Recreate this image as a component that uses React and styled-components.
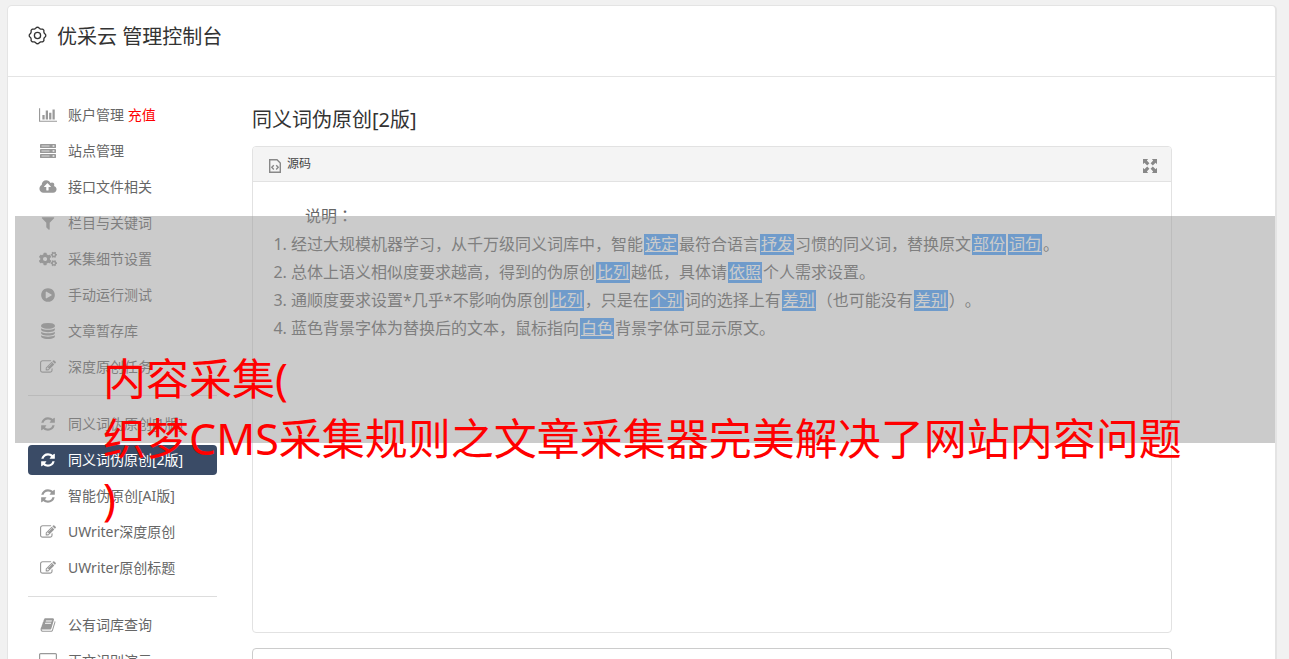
import React from "react";
import styled, { createGlobalStyle, css } from "styled-components";
import { FaCogs } from "react-icons/fa";

const GlobalStyle = createGlobalStyle`
  * {
    box-sizing: border-box;
  }

  html {
    scrollbar-width: none;
  }

  body {
    margin: 0;
    background: #f1f1f1;
    color: #333;
    font-family: "Noto Sans", "Noto Sans CJK SC", sans-serif;
    font-size: 14px;
    text-spacing-trim: space-all;
  }
`;

const Page = styled.div`
  position: relative;
  padding: 5px 12px 0 7px;
`;

const Shell = styled.div`
  background: #fff;
  border: 1px solid #e4e4e4;
  border-right-width: 2px;
  border-radius: 5px 5px 0 0;
`;

const Header = styled.header`
  display: flex;
  align-items: flex-start;
  gap: 10px;
  height: 71px;
  padding: 17px 20px 0;
  border-bottom: 1px solid #e4e4e4;

  svg {
    margin-top: 3px;
  }
`;

const HeaderTitle = styled.h1`
  margin: 0;
  font-size: 20px;
  font-weight: 400;
  line-height: 28px;
`;

const Body = styled.div`
  display: flex;
  gap: 35px;
  padding: 23px 103px 0 20px;
`;

const Sidebar = styled.nav`
  flex: none;
  width: 189px;
`;

const NavGroup = styled.ul`
  list-style: none;
  margin: 0;
  padding: 0 0 13px;
  display: flex;
  flex-direction: column;
  gap: 6px;

  & + & {
    padding-top: 13px;
    border-top: 1px solid #ddd;
  }
`;

const NavLink = styled.a`
  display: flex;
  align-items: center;
  gap: 10px;
  height: 30px;
  padding: 0 10px;
  border-radius: 4px;
  color: #666;
  line-height: 20px;
  text-decoration: none;
  white-space: nowrap;

  ${({ $active }) =>
    $active &&
    css`
      background: #3a4b66;
      color: #fff;
    `}
`;

const NavIcon = styled.span`
  flex: none;
  display: flex;
  justify-content: center;
  width: 20px;
  color: ${({ $active }) => ($active ? "#fff" : "#999")};
`;

const Recharge = styled.span`
  color: #f00;
`;

const Content = styled.main`
  flex: 1;
  min-width: 0;
`;

const PageTitle = styled.h2`
  margin: 5px 0 11px;
  font-size: 20px;
  font-weight: 400;
  line-height: 30px;
`;

const Editor = styled.section`
  min-height: 487px;
  border: 1px solid #e2e2e2;
  border-radius: 4px;
  overflow: hidden;
`;

const Toolbar = styled.div`
  display: flex;
  align-items: center;
  justify-content: space-between;
  height: 35px;
  padding: 0 14px 0 16px;
  background: #f4f4f4;
  border-bottom: 1px solid #e2e2e2;
`;

const ToolButton = styled.button`
  display: flex;
  align-items: center;
  gap: 6px;
  padding: 0;
  border: 0;
  background: none;
  color: #444;
  font: inherit;
  font-size: 12px;
  line-height: 20px;

  svg {
    margin-top: 3px;
    color: #888;
  }
`;

const Article = styled.div`
  padding: 20px;
  color: #666;
  font-size: 16px;
  line-height: 28px;
`;

const Lead = styled.p`
  margin: 0;
  font-family: "Noto Sans", "Noto Sans CJK TC", sans-serif;
  text-indent: 2em;
`;

const Notes = styled.ol`
  margin: 0;
  padding-left: 18px;
`;

const Swap = styled.span`
  display: inline-block;
  margin: 0 1px;
  padding: 0 1px;
  background: #479fff;
  color: #fff;
  line-height: 21px;
  text-decoration: underline;
`;

const Result = styled.textarea`
  display: block;
  width: 100%;
  height: 120px;
  margin-top: 15px;
  border: 1px solid #ccc;
  border-radius: 4px;
  resize: none;
`;

const Banner = styled.div`
  position: absolute;
  top: 216px;
  left: 15px;
  right: 14px;
  height: 227px;
  padding: 133px 0 0 88px;
  background: rgba(151, 151, 151, 0.5);
  pointer-events: none;
`;

const BannerText = styled.p`
  margin: 0;
  color: #f00;
  font-size: 43px;
  line-height: 60px;
  white-space: nowrap;
`;

const paths = {
  chart:
    "M640 896v512h-256v-512h256zm384-512v1024h-256v-1024h256zm1024 1152v128h-2048v-1536h128v1408h1920zm-640-896v768h-256v-768h256zm384-384v1152h-256v-1152h256z",
  cloud:
    "M1216 864q0-14-9-23l-352-352q-9-9-23-9t-23 9l-351 351q-10 12-10 24 0 14 9 23t23 9h224v352q0 13 9.5 22.5t22.5 9.5h192q13 0 22.5-9.5t9.5-22.5v-352h224q13 0 22.5-9.5t9.5-22.5zm640 288q0 159-112.5 271.5t-271.5 112.5h-1088q-185 0-316.5-131.5t-131.5-316.5q0-130 70-240t188-165q-2-30-2-43 0-212 150-362t362-150q156 0 285.5 87t188.5 231q71-62 166-62 106 0 181 75t75 181q0 76-41 138 130 31 213.5 135.5t83.5 238.5z",
  filter:
    "M1595 295q17 41-14 70l-493 493v742q0 42-39 59-13 5-25 5-27 0-45-19l-256-256q-19-19-19-45v-486l-493-493q-31-29-14-70 17-39 59-39h1280q42 0 59 39z",
  play: "M896 128q209 0 385.5 103t279.5 279.5 103 385.5-103 385.5-279.5 279.5-385.5 103-385.5-103-279.5-279.5-103-385.5 103-385.5 279.5-279.5 385.5-103zm384 823q32-18 32-55t-32-55l-544-320q-31-19-64-1-32 19-32 56v640q0 37 32 56 16 8 32 8 17 0 32-9z",
  database:
    "M896 768q237 0 443-43t325-127v170q0 69-103 128t-280 93.5-385 34.5-385-34.5-280-93.5-103-128v-170q119 84 325 127t443 43zm0 768q237 0 443-43t325-127v170q0 69-103 128t-280 93.5-385 34.5-385-34.5-280-93.5-103-128v-170q119 84 325 127t443 43zm0-384q237 0 443-43t325-127v170q0 69-103 128t-280 93.5-385 34.5-385-34.5-280-93.5-103-128v-170q119 84 325 127t443 43zm0-1152q208 0 385 34.5t280 93.5 103 128v128q0 69-103 128t-280 93.5-385 34.5-385-34.5-280-93.5-103-128v-128q0-69 103-128t280-93.5 385-34.5z",
  edit: "M888 1184l116-116-152-152-116 116v56h96v96h56zm440-720q-16-16-33 1l-350 350q-17 17-1 33t33-1l350-350q17-17 1-33zm80 594v190q0 119-84.5 203.5t-203.5 84.5h-832q-119 0-203.5-84.5t-84.5-203.5v-832q0-119 84.5-203.5t203.5-84.5h832q63 0 117 25 15 7 18 23 3 17-9 29l-49 49q-14 14-32 8-23-6-45-6h-832q-66 0-113 47t-47 113v832q0 66 47 113t113 47h832q66 0 113-47t47-113v-126q0-13 9-22l64-64q15-15 35-7t20 29zm-96-738l288 288-672 672h-288v-288zm444 132l-92 92-288-288 92-92q28-28 68-28t68 28l152 152q28 28 28 68t-28 68z",
  refresh:
    "M1639 1056q0 5-1 7-64 268-268 434.5t-478 166.5q-146 0-282.5-55t-243.5-157l-129 129q-19 19-45 19t-45-19-19-45v-448q0-26 19-45t45-19h448q26 0 45 19t19 45-19 45l-137 137q71 66 161 102t187 36q134 0 250-65t186-179q11-17 53-117 8-23 30-23h192q13 0 22.5 9.5t9.5 22.5zm25-800v448q0 26-19 45t-45 19h-448q-26 0-45-19t-19-45 19-45l138-138q-148-137-349-137-134 0-250 65t-186 179q-11 17-53 117-8 23-30 23h-199q-13 0-22.5-9.5t-9.5-22.5v-7q65-268 270-434.5t480-166.5q146 0 284 55.5t245 156.5l130-129q19-19 45-19t45 19 19 45z",
  book: "M1703 478q40 57 18 129l-275 906q-19 64-76.5 107.5t-122.5 43.5h-923q-77 0-148.5-53.5t-99.5-131.5q-24-67-2-127 0-4 3-27t4-37q1-8-3-21.5t-3-19.5q2-11 8-21t16.5-23.5 16.5-23.5q23-38 45-91.5t30-91.5q3-10 .5-30t-.5-28q3-11 17-28t17-23q21-36 42-92t25-90q1-9-2.5-32t.5-28q4-13 22-30.5t22-22.5q19-26 42.5-84.5t27.5-96.5q1-8-3-25.5t-2-26.5q2-8 9-18t18-23 17-21q8-12 16.5-30.5t15-35 16-36 19.5-32 26.5-23.5 36-11.5 47.5 5.5l-1 3q38-9 51-9h761q74 0 114 56t18 130l-274 906q-36 119-71.5 153.5t-128.5 34.5h-869q-27 0-38 15-11 16-1 43 24 70 144 70h923q29 0 56-15.5t35-41.5l300-987q7-22 5-57 38 15 59 43zm-1064 2q-4 13 2 22.5t20 9.5h608q13 0 25.5-9.5t16.5-22.5l21-64q4-13-2-22.5t-20-9.5h-608q-13 0-25.5 9.5t-16.5 22.5zm-83 256q-4 13 2 22.5t20 9.5h608q13 0 25.5-9.5t16.5-22.5l21-64q4-13-2-22.5t-20-9.5h-608q-13 0-25.5 9.5t-16.5 22.5z",
};

// [left edge, box width, drawn width]
const boxes = {
  chart: [0, 2048, 18],
  cloud: [-64, 1920, 18],
};

const Glyph = ({ name }) => {
  const [x, w, width] = boxes[name] || [0, 1792, 16];
  return (
    <svg width={width} height="16" viewBox={`${x} 0 ${w} 1792`} fill="currentColor" aria-hidden="true">
      <path d={paths[name]} />
    </svg>
  );
};

const ServerIcon = () => (
  <svg width="16" height="14" viewBox="0 0 16 14" fill="currentColor" aria-hidden="true">
    {[0, 5, 10].map((y) => (
      <g key={y}>
        <rect y={y} width="16" height="4" rx="0.4" />
        <path d={`M1.5 ${y + 2}h8`} stroke="#fff" strokeWidth="1.2" opacity="0.55" />
        <path d={`M12.6 ${y + 2}h1.8`} stroke="#fff" strokeWidth="1.6" opacity="0.8" />
      </g>
    ))}
  </svg>
);

const ScreenIcon = () => (
  <svg width="18" height="16" viewBox="0 0 18 16" fill="none" stroke="currentColor" aria-hidden="true">
    <rect x="0.6" y="0.6" width="16.8" height="12" rx="1" strokeWidth="1.2" />
    <path d="M6 15.4h6M9 12.6v2.8" strokeWidth="1.4" />
  </svg>
);

// shallow rounded teeth around a small hub
const GearIcon = () => {
  const points = Array.from({ length: 96 }, (_, i) => {
    const a = (i / 96) * Math.PI * 2;
    const r = 7.7 + 0.6 * Math.tanh(1.6 * Math.cos(a * 8));
    return `${(9.5 + r * Math.sin(a)).toFixed(2)},${(9.5 - r * Math.cos(a)).toFixed(2)}`;
  });
  return (
    <svg width="19" height="19" viewBox="0 0 19 19" fill="none" stroke="#333" strokeWidth="1.3" strokeLinejoin="round" aria-hidden="true">
      <polygon points={points.join(" ")} />
      <circle cx="9.5" cy="9.5" r="3.1" />
    </svg>
  );
};

const SourceIcon = () => (
  <svg width="12" height="14" viewBox="0 0 12 14" fill="none" stroke="currentColor" aria-hidden="true">
    <path d="M0.7 0.7h7.3l3.3 3.3v9.3h-10.6z" strokeWidth="1.4" />
    <path d="M4.8 6.2l-2 2.1 2 2.1M7.2 6.2l2 2.1-2 2.1" strokeWidth="1.4" />
  </svg>
);

const ExpandIcon = () => (
  <svg width="14" height="14" viewBox="0 0 14 14" fill="currentColor" aria-hidden="true">
    {[0, 90, 180, 270].map((turn) => (
      <path key={turn} transform={`rotate(${turn} 7 7)`} d="M0 0h5.2l-1.4 1.4 2.6 2.8-2.2 2.2-2.8-2.6-1.4 1.4z" />
    ))}
  </svg>
);

const groups = [
  [
    { icon: <Glyph name="chart" />, label: "账户管理", extra: "充值" },
    { icon: <ServerIcon />, label: "站点管理" },
    { icon: <Glyph name="cloud" />, label: "接口文件相关" },
    { icon: <Glyph name="filter" />, label: "栏目与关键词" },
    { icon: <FaCogs size={18} />, label: "采集细节设置" },
    { icon: <Glyph name="play" />, label: "手动运行测试" },
    { icon: <Glyph name="database" />, label: "文章暂存库" },
    { icon: <Glyph name="edit" />, label: "深度原创任务" },
  ],
  [
    { icon: <Glyph name="refresh" />, label: "同义词伪原创[1版]" },
    { icon: <Glyph name="refresh" />, label: "同义词伪原创[2版]", active: true },
    { icon: <Glyph name="refresh" />, label: "智能伪原创[AI版]" },
    { icon: <Glyph name="edit" />, label: "UWriter深度原创" },
    { icon: <Glyph name="edit" />, label: "UWriter原创标题" },
  ],
  [
    { icon: <Glyph name="book" />, label: "公有词库查询" },
    { icon: <ScreenIcon />, label: "正文识别演示" },
  ],
];

const App = () => {
  return (
    <>
      <GlobalStyle />
      <Page>
        <Shell>
          <Header>
            <GearIcon />
            <HeaderTitle>优采云 管理控制台</HeaderTitle>
          </Header>

          <Body>
            <Sidebar>
              {groups.map((items, index) => (
                <NavGroup key={index}>
                  {items.map(({ icon, label, extra, active }) => (
                    <li key={label}>
                      <NavLink href="#" $active={active}>
                        <NavIcon $active={active}>{icon}</NavIcon>
                        <span>
                          {label}
                          {extra && <Recharge> {extra}</Recharge>}
                        </span>
                      </NavLink>
                    </li>
                  ))}
                </NavGroup>
              ))}
            </Sidebar>

            <Content>
              <PageTitle>同义词伪原创[2版]</PageTitle>
              <Editor>
                <Toolbar>
                  <ToolButton type="button">
                    <SourceIcon />
                    源码
                  </ToolButton>
                  <ToolButton type="button" aria-label="全屏">
                    <ExpandIcon />
                  </ToolButton>
                </Toolbar>
                <Article>
                  <Lead>说明：</Lead>
                  <Notes>
                    <li>
                      经过大规模机器学习，从千万级同义词库中，智能<Swap>选定</Swap>最符合语言<Swap>抒发</Swap>习惯的同义词，替换原文<Swap>部份</Swap><Swap>词句</Swap>。
                    </li>
                    <li>
                      总体上语义相似度要求越高，得到的伪原创<Swap>比列</Swap>越低，具体请<Swap>依照</Swap>个人需求设置。
                    </li>
                    <li>
                      通顺度要求设置*几乎*不影响伪原创<Swap>比列</Swap>，只是在<Swap>个别</Swap>词的选择上有<Swap>差别</Swap>（也可能没有<Swap>差别</Swap>）。
                    </li>
                    <li>
                      蓝色背景字体为替换后的文本，鼠标指向<Swap>白色</Swap>背景字体可显示原文。
                    </li>
                  </Notes>
                </Article>
              </Editor>
              <Result aria-label="结果" />
            </Content>
          </Body>
        </Shell>

        <Banner>
          <BannerText>
            内容采集(
            <br />
            织梦CMS采集规则之文章采集器完美解决了网站内容问题
            <br />)
          </BannerText>
        </Banner>
      </Page>
    </>
  );
};

export default App;
